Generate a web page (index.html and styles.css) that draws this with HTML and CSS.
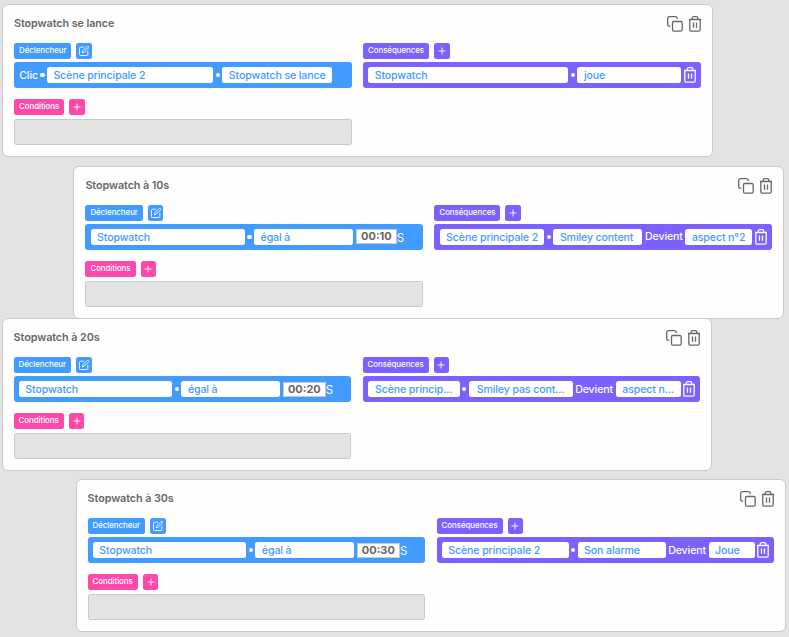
FILE: index.html
```
<!DOCTYPE html>
<html lang="fr">
<head>
  <meta charset="UTF-8">
  <meta name="viewport" content="width=device-width, initial-scale=1.0">
  <title>Stopwatch - Interactions</title>
  <link rel="stylesheet" href="styles.css">
</head>
<body>
  <!-- Icônes -->
  <svg class="sprite" aria-hidden="true">
    <symbol id="copy" viewBox="0 0 16 16">
      <path d="M3.200 10.200H2.200A1.500 1.500 0 0 1 .700 8.700V2.200A1.500 1.500 0 0 1 2.200 .700H8.700A1.500 1.500 0 0 1 10.200 2.200V3"/>
      <rect x="5.500" y="5.500" width="9.700" height="9.700" rx="1.400"/>
    </symbol>
    <symbol id="trash" viewBox="0 0 12 16">
      <path d="M0 3.500H12M.8 3.500V13.700A1.500 1.500 0 0 0 2.300 15.200H9.700A1.500 1.500 0 0 0 11.200 13.700V3.500M3.200 3.500V2.200A1.500 1.500 0 0 1 4.700 .700H7.300A1.500 1.500 0 0 1 8.800 2.200V3.500M4.500 6.500V11.700M7.500 6.500V11.700"/>
    </symbol>
    <symbol id="edit" viewBox="0 0 10 10">
      <path d="M5 1.200H1.500A1 1 0 0 0 .5 2.200V8.500A1 1 0 0 0 1.500 9.500H7.800A1 1 0 0 0 8.800 8.500V5M3.300 6.700L3.700 4.900L8 .600A.9.900 0 0 1 9.400 2L5.100 6.300Z"/>
    </symbol>
    <symbol id="plus" viewBox="0 0 10 10">
      <path d="M5 1.500V8.500M1.500 5H8.500"/>
    </symbol>
  </svg>

  <main class="board">
    <section class="card card-start">
      <div class="card-header">
        <h2>Stopwatch se lance</h2>
        <div class="actions">
          <svg class="icon-copy"><use href="#copy"/></svg>
          <svg class="icon-trash"><use href="#trash"/></svg>
        </div>
      </div>
      <div class="columns">
        <div class="column">
          <div class="tags blue"><span class="tag">Déclencheur</span><span class="tag-button"><svg><use href="#edit"/></svg></span></div>
          <div class="bar blue">
            <span class="word click">Clic</span><span class="dot"></span>
            <span class="field click-scene">Scène principale 2</span><span class="dot"></span>
            <span class="field click-target">Stopwatch se lance</span>
          </div>
          <div class="tags pink"><span class="tag">Conditions</span><span class="tag-button"><svg><use href="#plus"/></svg></span></div>
          <div class="empty"></div>
        </div>
        <div class="column">
          <div class="tags purple"><span class="tag">Conséquences</span><span class="tag-button"><svg><use href="#plus"/></svg></span></div>
          <div class="bar purple">
            <span class="field grow">Stopwatch</span><span class="dot"></span>
            <span class="field play">joue</span>
            <svg class="icon-trash"><use href="#trash"/></svg>
          </div>
        </div>
      </div>
    </section>

    <section class="card card-10">
      <div class="card-header">
        <h2>Stopwatch à 10s</h2>
        <div class="actions">
          <svg class="icon-copy"><use href="#copy"/></svg>
          <svg class="icon-trash"><use href="#trash"/></svg>
        </div>
      </div>
      <div class="columns">
        <div class="column">
          <div class="tags blue"><span class="tag">Déclencheur</span><span class="tag-button"><svg><use href="#edit"/></svg></span></div>
          <div class="bar blue">
            <span class="field watch">Stopwatch</span><span class="dot"></span>
            <span class="field compare">égal à</span>
            <span class="time">00:10</span><span class="unit">S</span>
          </div>
          <div class="tags pink"><span class="tag">Conditions</span><span class="tag-button"><svg><use href="#plus"/></svg></span></div>
          <div class="empty"></div>
        </div>
        <div class="column">
          <div class="tags purple"><span class="tag">Conséquences</span><span class="tag-button"><svg><use href="#plus"/></svg></span></div>
          <div class="bar purple">
            <span class="field grow">Scène principale 2</span><span class="dot"></span>
            <span class="field smiley">Smiley content</span>
            <span class="word becomes">Devient</span>
            <span class="field aspect">aspect n°2</span>
            <svg class="icon-trash"><use href="#trash"/></svg>
          </div>
        </div>
      </div>
    </section>

    <section class="card card-20">
      <div class="card-header">
        <h2>Stopwatch à 20s</h2>
        <div class="actions">
          <svg class="icon-copy"><use href="#copy"/></svg>
          <svg class="icon-trash"><use href="#trash"/></svg>
        </div>
      </div>
      <div class="columns">
        <div class="column">
          <div class="tags blue"><span class="tag">Déclencheur</span><span class="tag-button"><svg><use href="#edit"/></svg></span></div>
          <div class="bar blue">
            <span class="field watch">Stopwatch</span><span class="dot"></span>
            <span class="field compare">égal à</span>
            <span class="time">00:20</span><span class="unit">S</span>
          </div>
          <div class="tags pink"><span class="tag">Conditions</span><span class="tag-button"><svg><use href="#plus"/></svg></span></div>
          <div class="empty"></div>
        </div>
        <div class="column">
          <div class="tags purple"><span class="tag">Conséquences</span><span class="tag-button"><svg><use href="#plus"/></svg></span></div>
          <div class="bar purple">
            <span class="field cut grow">Scène princip...</span><span class="dot"></span>
            <span class="field cut smiley-cut">Smiley pas cont...</span>
            <span class="word becomes">Devient</span>
            <span class="field cut aspect-cut">aspect n...</span>
            <svg class="icon-trash"><use href="#trash"/></svg>
          </div>
        </div>
      </div>
    </section>

    <section class="card card-30">
      <div class="card-header">
        <h2>Stopwatch à 30s</h2>
        <div class="actions">
          <svg class="icon-copy"><use href="#copy"/></svg>
          <svg class="icon-trash"><use href="#trash"/></svg>
        </div>
      </div>
      <div class="columns">
        <div class="column">
          <div class="tags blue"><span class="tag">Déclencheur</span><span class="tag-button"><svg><use href="#edit"/></svg></span></div>
          <div class="bar blue">
            <span class="field watch">Stopwatch</span><span class="dot"></span>
            <span class="field compare">égal à</span>
            <span class="time">00:30</span><span class="unit">S</span>
          </div>
          <div class="tags pink"><span class="tag">Conditions</span><span class="tag-button"><svg><use href="#plus"/></svg></span></div>
          <div class="empty"></div>
        </div>
        <div class="column">
          <div class="tags purple"><span class="tag">Conséquences</span><span class="tag-button"><svg><use href="#plus"/></svg></span></div>
          <div class="bar purple">
            <span class="field grow">Scène principale 2</span><span class="dot"></span>
            <span class="field alarm">Son alarme</span>
            <span class="word becomes">Devient</span>
            <span class="field alarm-state">Joue</span>
            <svg class="icon-trash"><use href="#trash"/></svg>
          </div>
        </div>
      </div>
    </section>
  </main>
</body>
</html>
```
FILE: styles.css
```
* {
  box-sizing: border-box;
}

body {
  margin: 0;
  background-color: #e3e3e3;
  color: #6b6666;
  font-family: Inter, "Liberation Sans", sans-serif;
  font-size: 10.6px;
}

.sprite {
  display: none;
}

svg {
  fill: none;
  stroke: currentColor;
  stroke-width: 1.3;
  stroke-linejoin: round;
  flex: none;
}

.board {
  height: 637px;
  padding: 4px 0 0 2px;
  overflow: hidden;
}

.card {
  width: 710.5px;
  height: 153px;
  padding: 11px 11px 0 11px;
  background-color: #fefefe;
  border: 1px solid #c9c9c9;
  border-radius: 6px;
}

.card-10 {
  margin: 8.6px 0 0 71.4px;
}

.card-20 {
  margin: -0.6px 0 0 -0.4px;
}

.card-30 {
  margin: 8px 0 0 73.6px;
}

.card-header {
  display: flex;
  justify-content: space-between;
  height: 27px;
}

h2 {
  margin: 0;
  font-size: 10.8px;
  font-weight: 600;
  letter-spacing: -0.08px;
  line-height: 15px;
}

.actions {
  display: flex;
  gap: 6px;
}

.icon-copy {
  width: 16px;
  height: 16px;
}

.icon-trash {
  width: 12px;
  height: 16px;
}

.columns {
  display: flex;
  gap: 11.5px;
}

.column {
  flex: 1;
  min-width: 0;
}

.tags {
  display: flex;
  gap: 5px;
  height: 16px;
  margin-bottom: 3.3px;
}

.tag {
  padding: 0 5px;
  border-radius: 2.5px;
  color: #fff;
  font-size: 7.9px;
  font-weight: 500;
  letter-spacing: -0.05px;
  line-height: 15px;
}

.tag-button {
  display: flex;
  align-items: center;
  justify-content: center;
  width: 15.6px;
  border-radius: 2.5px;
  color: #fff;
}

.tag-button svg {
  width: 10px;
  height: 10px;
  stroke-width: 0.9;
}

.bar {
  display: flex;
  align-items: center;
  height: 26px;
  margin-bottom: 11.2px;
  padding: 0 5px 0 5.2px;
  border-radius: 3px;
  color: #fff;
}

.blue .tag,
.blue .tag-button,
.bar.blue {
  background-color: #429bff;
}

.pink .tag,
.pink .tag-button {
  background-color: #ff48aa;
}

.purple .tag,
.purple .tag-button,
.bar.purple {
  background-color: #7b61ff;
}

.word {
  font-weight: 500;
  letter-spacing: -0.1px;
  white-space: nowrap;
}

.dot {
  flex: none;
  width: 4.4px;
  height: 4.4px;
  margin: 0 2.3px;
  border-radius: 50%;
  background-color: #fff;
}

.field {
  flex: none;
  height: 16px;
  padding: 0 6.5px;
  border-radius: 2.5px;
  background-color: #fff;
  color: #429bff;
  font-weight: 500;
  letter-spacing: -0.12px;
  line-height: 17px;
  white-space: nowrap;
}

.field.grow {
  flex: 1;
  min-width: 0;
}

.field.cut {
  padding: 0;
  text-align: center;
}

.click {
  width: 19px;
}

.click + .dot {
  margin-left: 2px;
}

.click-scene {
  width: 166.5px;
}

.click-target {
  width: 110px;
}

.play {
  width: 103.6px;
}

.watch {
  width: 154.5px;
}

.card-20 .watch,
.card-30 .watch {
  width: 153.6px;
}

.compare {
  width: 99px;
}

.smiley {
  width: 89px;
}

.smiley-cut {
  width: 104px;
}

.aspect {
  width: 67px;
}

.aspect-cut {
  width: 65px;
}

.alarm {
  width: 88px;
}

.alarm-state {
  width: 46px;
}

.becomes {
  width: 43px;
  text-align: center;
}

.bar .icon-trash {
  margin-left: 2.5px;
}

.time {
  height: 15px;
  margin-left: 3px;
  padding: 0 4px;
  border: 1px solid #c9c9c9;
  background-color: #fff;
  color: #6b6666;
  font-size: 11px;
  font-weight: 700;
  line-height: 13px;
}

.card-20 .time,
.card-30 .time {
  margin-left: 2.5px;
}

.unit {
  margin-top: 2px;
  font-size: 11.5px;
}

.empty {
  height: 26px;
  margin-top: 3.5px;
  background-color: #e3e3e3;
  border: 1px solid #c9c9c9;
  border-radius: 2.5px;
}
```
